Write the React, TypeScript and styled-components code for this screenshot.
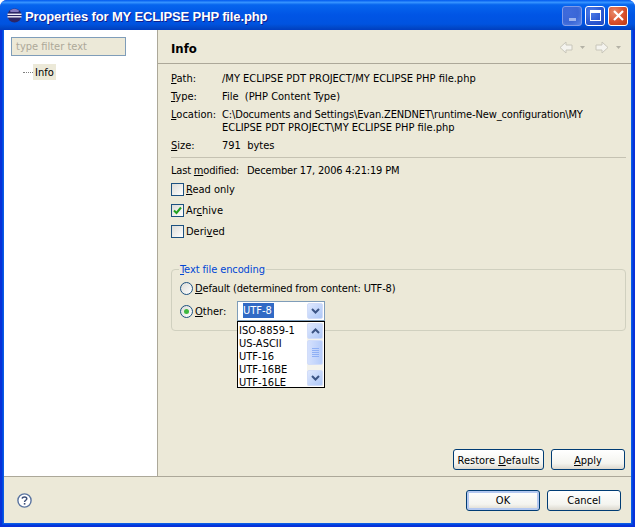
import styled, { createGlobalStyle } from "styled-components";

const GlobalStyle = createGlobalStyle`
  html, body {
    margin: 0;
    padding: 0;
    background: #fff;
  }
  body {
    font-family: "DejaVu Sans Condensed", "DejaVu Sans", "Liberation Sans", sans-serif;
    font-size: 11px;
    color: #000;
  }
`;

const Window = styled.div`
  width: 635px;
  height: 527px;
  display: flex;
  flex-direction: column;
  background: #0831d9;
  border-radius: 7px 7px 0 0;
  overflow: hidden;
`;

const TitleBar = styled.div`
  height: 30px;
  display: flex;
  align-items: center;
  padding: 1px 7px 0;
  box-sizing: border-box;
  gap: 3px;
  background: linear-gradient(
    180deg,
    #0058ee 0%,
    #3593ff 8%,
    #0665ee 16%,
    #0055e5 50%,
    #0053e0 80%,
    #0148c8 92%,
    #003dc0 100%
  );
`;

const TitleText = styled.div`
  flex: 1;
  padding-top: 2px;
  font-family: "Liberation Sans", sans-serif;
  font-weight: 700;
  font-size: 13px;
  letter-spacing: -0.13px;
  color: #fff;
  text-shadow: 1px 1px 0 #0f1f8f;
`;

const Controls = styled.div`
  display: flex;
  gap: 3px;
`;

const ControlButton = styled.div<{ $kind: "min" | "max" | "close" }>`
  width: 20px;
  height: 20px;
  box-sizing: border-box;
  border: 1px solid ${(p) => (p.$kind === "min" ? "#7f9be8" : "#fff")};
  border-radius: 3px;
  display: flex;
  align-items: center;
  justify-content: center;
  background: ${(p) =>
    p.$kind === "close"
      ? "radial-gradient(circle at 30% 30%, #e98a6a, #d8502c 55%, #bd3a12)"
      : p.$kind === "max"
      ? "radial-gradient(circle at 30% 30%, #4f7de8, #2a57d0 60%, #2048c0)"
      : "radial-gradient(circle at 30% 30%, #3f6bdc, #3a66d6 55%, #5c86e6)"};
`;

const Body = styled.div`
  flex: 1;
  display: flex;
  flex-direction: column;
  margin: 0 4px 4px;
  background: #ece9d8;
  min-height: 0;
  box-shadow: 0 0 0 1px #0a5ae6, 0 0 0 2px #0048e0;
  clip-path: inset(0 -4px -4px -4px);
`;

const Main = styled.div`
  flex: 1;
  display: flex;
  min-height: 0;
`;

const Sidebar = styled.div`
  width: 146px;
  background: #fff;
  border-right: 1px solid #aca899;
  padding: 7px 0 0 7px;
`;

const FilterInput = styled.div`
  width: 115px;
  height: 19px;
  box-sizing: border-box;
  background: #ece9d8;
  border: 1px solid #7f9db9;
  padding-left: 4px;
  line-height: 18px;
  color: #aca899;
`;

const TreeRow = styled.div`
  display: flex;
  align-items: center;
  margin: 8px 0 0 12px;
`;

const TreeDots = styled.div`
  width: 10px;
  border-top: 1px dotted #808080;
`;

const TreeLabel = styled.div<{ $selected?: boolean }>`
  height: 16px;
  line-height: 17px;
  padding: 0 2px;
  background: ${(p) => (p.$selected ? "#ece9d8" : "transparent")};
`;

const Content = styled.div`
  flex: 1;
  display: flex;
  flex-direction: column;
  min-width: 0;
`;

const Header = styled.div`
  height: 34px;
  box-sizing: border-box;
  border-bottom: 1px solid #aca899;
  display: flex;
  align-items: center;
  justify-content: space-between;
  padding: 2px 10px 0 13px;
`;

const HeaderTitle = styled.div`
  padding-top: 2px;
  font-weight: 700;
  font-size: 13px;
`;

const NavGroup = styled.div`
  display: flex;
  align-items: center;
  gap: 10px;
`;

const NavItem = styled.div`
  display: flex;
  align-items: center;
  gap: 7px;
`;

const Panel = styled.div`
  flex: 1;
  display: flex;
  flex-direction: column;
  padding: 8px 5px 6px 13px;
  min-height: 0;
`;

const InfoRow = styled.div`
  display: flex;
  margin-bottom: 5px;
  line-height: 13px;
`;

const InfoLabel = styled.div`
  width: 51px;
  flex: none;
`;

const InfoValue = styled.div`
  flex: 1;
  white-space: pre-wrap;
`;

const InfoLine = styled.div<{ $tight?: boolean }>`
  white-space: nowrap;
  letter-spacing: ${(p) => (p.$tight ? "-0.14px" : "0")};
`;

const Mnemonic = styled.span`
  text-decoration: underline;
`;

const Separator = styled.div`
  height: 1px;
  background: #c5c2b2;
  margin: 0 0 6px;
`;

const ModifiedRow = styled.div`
  line-height: 13px;
  display: flex;
  gap: 8px;
  letter-spacing: -0.18px;
`;

const CheckList = styled.div`
  display: flex;
  flex-direction: column;
  gap: 8px;
  margin-top: 6px;
`;

const CheckRow = styled.div`
  display: flex;
  align-items: center;
  gap: 2px;
  height: 13px;
`;

const CheckBox = styled.div`
  width: 13px;
  height: 13px;
  box-sizing: border-box;
  border: 1px solid #1c5180;
  background: linear-gradient(135deg, #dcdcd7, #fff);
  display: flex;
  align-items: center;
  justify-content: center;
`;

const GroupBox = styled.div`
  position: relative;
  margin-top: 31px;
  height: 62px;
  box-sizing: border-box;
  border: 1px solid #d0d0bf;
  border-radius: 4px;
  padding: 12px 8px 0;
`;

const GroupLegend = styled.div`
  position: absolute;
  top: -7px;
  left: 7px;
  padding: 0 1px;
  background: #ece9d8;
  color: #0046d5;
  line-height: 13px;
  letter-spacing: -0.1px;
`;

const RadioRow = styled.div`
  display: flex;
  align-items: center;
  gap: 2px;
  height: 13px;
  margin-bottom: 10px;
`;

const Radio = styled.div<{ $on?: boolean }>`
  width: 13px;
  height: 13px;
  box-sizing: border-box;
  border: 1px solid #1c5180;
  border-radius: 50%;
  background: linear-gradient(135deg, #dcdcd7, #fff);
  display: flex;
  align-items: center;
  justify-content: center;
  &::after {
    content: "";
    display: ${(p) => (p.$on ? "block" : "none")};
    width: 5px;
    height: 5px;
    border-radius: 50%;
    background: #3fb83f;
  }
`;

const RadioText = styled.span`
  letter-spacing: -0.16px;
`;

const OtherLabel = styled.div`
  width: 40px;
`;

const Combo = styled.div`
  position: relative;
  width: 88px;
  height: 20px;
  margin-top: -2px;
  box-sizing: border-box;
  border: 1px solid #7f9db9;
  background: #fff;
  display: flex;
  align-items: center;
  padding: 0 1px 0 5px;
`;

const ComboText = styled.div`
  flex: 1;
  span {
    background: #316ac5;
    color: #fff;
    padding: 1px 2px 1px 0;
  }
`;

const ArrowButton = styled.div<{ $h: number }>`
  width: 16px;
  height: ${(p) => p.$h}px;
  box-sizing: border-box;
  border: 1px solid #d2ddf9;
  border-radius: 2px;
  background: linear-gradient(135deg, #dfe8fe, #aec8f7);
  display: flex;
  align-items: center;
  justify-content: center;
  flex: none;
`;

const DropList = styled.div`
  position: absolute;
  left: -1px;
  top: 19px;
  width: 88px;
  height: 67px;
  box-sizing: border-box;
  border: 1px solid #000;
  background: #fff;
  display: flex;
  z-index: 2;
`;

const DropItems = styled.div`
  flex: 1;
  padding: 2px 0 0 1px;
  line-height: 13px;
`;

const ScrollTrack = styled.div`
  width: 16px;
  margin: 1px 1px 1px 0;
  background: #f4f3ec;
  display: flex;
  flex-direction: column;
`;

const ScrollThumb = styled.div`
  height: 25px;
  box-sizing: border-box;
  margin: 1px 0 0;
  border: 1px solid #d2ddf9;
  border-radius: 2px;
  background: linear-gradient(90deg, #d5e1fd, #b6ccfa);
  display: flex;
  flex-direction: column;
  align-items: center;
  justify-content: center;
  gap: 1px;
  i {
    display: block;
    width: 7px;
    height: 1px;
    background: #8fb0f5;
  }
`;

const TrackSpace = styled.div`
  flex: 1;
`;

const ApplyRow = styled.div`
  margin-top: auto;
  margin-right: 1px;
  display: flex;
  justify-content: flex-end;
  gap: 7px;
`;

const Button = styled.div<{ $w: number; $default?: boolean }>`
  width: ${(p) => p.$w}px;
  height: 21px;
  box-sizing: border-box;
  padding-top: 1px;
  border: 1px solid #003c74;
  border-radius: 3px;
  background: linear-gradient(180deg, #fff, #f4f4ef 70%, #dcd8ce);
  box-shadow: ${(p) => (p.$default ? "inset 0 0 0 2px #b4c8f0" : "none")};
  display: flex;
  align-items: center;
  justify-content: center;
`;

const Footer = styled.div`
  height: 47px;
  box-sizing: border-box;
  border-top: 1px solid #aca899;
  display: flex;
  align-items: center;
  justify-content: space-between;
  padding: 0 10px 0 13px;
`;

const FooterButtons = styled.div`
  display: flex;
  gap: 7px;
`;

const EclipseIcon = () => (
  <svg width="15" height="15" viewBox="0 0 15 15">
    <circle cx="7.5" cy="7.5" r="7" fill="#2c2566" />
    <path d="M3 2.5 A7 7 0 0 1 12 2.5 L11.5 4 H3.5 Z" fill="#8378c0" />
    <rect x="0.5" y="5.6" width="14" height="1.4" fill="#f0eefa" />
    <rect x="0.5" y="8.1" width="14" height="1.4" fill="#f0eefa" />
  </svg>
);

const NavArrow = ({ dir }: { dir: "left" | "right" }) => (
  <svg width="14" height="13" viewBox="0 0 14 13">
    <path
      d={dir === "left" ? "M1 6.5 L7 1 V4 H13 V9 H7 V12 Z" : "M13 6.5 L7 1 V4 H1 V9 H7 V12 Z"}
      fill="#f4f3ee"
      stroke="#c8c6ba"
    />
  </svg>
);

const NavCaret = () => (
  <svg width="5" height="3" viewBox="0 0 5 3">
    <path d="M0 0 H5 L2.5 3 Z" fill="#b4b2a6" />
  </svg>
);

const Chevron = ({ up }: { up?: boolean }) => (
  <svg width="9" height="6" viewBox="0 0 9 6">
    <path
      d={up ? "M1 5 L4.5 1.5 L8 5" : "M1 1 L4.5 4.5 L8 1"}
      fill="none"
      stroke="#3c5585"
      strokeWidth="2"
    />
  </svg>
);

const HelpIcon = () => (
  <svg width="15" height="15" viewBox="0 0 15 15">
    <circle cx="7.5" cy="7.5" r="6.6" fill="#fff" stroke="#5a74a0" strokeWidth="1.4" />
    <path d="M5.2 5.6 C5.4 3.4 9.8 3.4 9.8 5.7 C9.8 7.3 7.6 7.2 7.6 9" fill="none" stroke="#3c4f78" strokeWidth="1.5" />
    <rect x="6.8" y="10" width="1.6" height="1.6" fill="#3c4f78" />
  </svg>
);

export default function App() {
  return (
    <>
      <GlobalStyle />
      <Window>
        <TitleBar>
          <EclipseIcon />
          <TitleText>Properties for MY ECLIPSE PHP file.php</TitleText>
          <Controls>
            <ControlButton $kind="min">
              <svg width="9" height="11" viewBox="0 0 9 11">
                <rect x="1" y="8" width="7" height="3" fill="#9db4ee" />
              </svg>
            </ControlButton>
            <ControlButton $kind="max">
              <svg width="11" height="11" viewBox="0 0 11 11">
                <rect x="0.5" y="0.5" width="10" height="10" fill="none" stroke="#fff" />
                <rect x="0" y="0" width="11" height="3" fill="#fff" />
              </svg>
            </ControlButton>
            <ControlButton $kind="close">
              <svg width="11" height="11" viewBox="0 0 11 11">
                <path d="M1 1 L10 10 M10 1 L1 10" stroke="#fff" strokeWidth="2.2" />
              </svg>
            </ControlButton>
          </Controls>
        </TitleBar>
        <Body>
          <Main>
            <Sidebar>
              <FilterInput>type filter text</FilterInput>
              <TreeRow>
                <TreeDots />
                <TreeLabel $selected>Info</TreeLabel>
              </TreeRow>
            </Sidebar>
            <Content>
              <Header>
                <HeaderTitle>Info</HeaderTitle>
                <NavGroup>
                  <NavItem>
                    <NavArrow dir="left" />
                    <NavCaret />
                  </NavItem>
                  <NavItem>
                    <NavArrow dir="right" />
                    <NavCaret />
                  </NavItem>
                </NavGroup>
              </Header>
              <Panel>
                <InfoRow>
                  <InfoLabel><Mnemonic>P</Mnemonic>ath:</InfoLabel>
                  <InfoValue>/MY ECLIPSE PDT PROJECT/MY ECLIPSE PHP file.php</InfoValue>
                </InfoRow>
                <InfoRow>
                  <InfoLabel><Mnemonic>T</Mnemonic>ype:</InfoLabel>
                  <InfoValue>File  (PHP Content Type)</InfoValue>
                </InfoRow>
                <InfoRow>
                  <InfoLabel><Mnemonic>L</Mnemonic>ocation:</InfoLabel>
                  <InfoValue>
                    <InfoLine $tight>C:\Documents and Settings\Evan.ZENDNET\runtime-New_configuration\MY</InfoLine>
                    <InfoLine>ECLIPSE PDT PROJECT\MY ECLIPSE PHP file.php</InfoLine>
                  </InfoValue>
                </InfoRow>
                <InfoRow>
                  <InfoLabel><Mnemonic>S</Mnemonic>ize:</InfoLabel>
                  <InfoValue>791  bytes</InfoValue>
                </InfoRow>
                <Separator />
                <ModifiedRow>
                  <span>Last <Mnemonic>m</Mnemonic>odified:</span>
                  <span>December 17, 2006 4:21:19 PM</span>
                </ModifiedRow>
                <CheckList>
                  <CheckRow>
                    <CheckBox />
                    <span><Mnemonic>R</Mnemonic>ead only</span>
                  </CheckRow>
                  <CheckRow>
                    <CheckBox>
                      <svg width="9" height="9" viewBox="0 0 9 9">
                        <path d="M1 4.5 L3.5 7 L8 1.5" fill="none" stroke="#21a121" strokeWidth="2" />
                      </svg>
                    </CheckBox>
                    <span>Ar<Mnemonic>c</Mnemonic>hive</span>
                  </CheckRow>
                  <CheckRow>
                    <CheckBox />
                    <span>Deri<Mnemonic>v</Mnemonic>ed</span>
                  </CheckRow>
                </CheckList>
                <GroupBox>
                  <GroupLegend><Mnemonic>T</Mnemonic>ext file encoding</GroupLegend>
                  <RadioRow>
                    <Radio />
                    <RadioText><Mnemonic>D</Mnemonic>efault (determined from content: UTF-8)</RadioText>
                  </RadioRow>
                  <RadioRow>
                    <Radio $on />
                    <OtherLabel><Mnemonic>O</Mnemonic>ther:</OtherLabel>
                    <Combo>
                      <ComboText><span>UTF-8</span></ComboText>
                      <ArrowButton $h={16}><Chevron /></ArrowButton>
                      <DropList>
                        <DropItems>
                          <div>ISO-8859-1</div>
                          <div>US-ASCII</div>
                          <div>UTF-16</div>
                          <div>UTF-16BE</div>
                          <div>UTF-16LE</div>
                        </DropItems>
                        <ScrollTrack>
                          <ArrowButton $h={16}><Chevron up /></ArrowButton>
                          <ScrollThumb><i /><i /><i /><i /><i /></ScrollThumb>
                          <TrackSpace />
                          <ArrowButton $h={16}><Chevron /></ArrowButton>
                        </ScrollTrack>
                      </DropList>
                    </Combo>
                  </RadioRow>
                </GroupBox>
                <ApplyRow>
                  <Button $w={91}>
                    <span>Restore <Mnemonic>D</Mnemonic>efaults</span>
                  </Button>
                  <Button $w={74}>
                    <span><Mnemonic>A</Mnemonic>pply</span>
                  </Button>
                </ApplyRow>
              </Panel>
            </Content>
          </Main>
          <Footer>
            <HelpIcon />
            <FooterButtons>
              <Button $w={74} $default>OK</Button>
              <Button $w={74}>Cancel</Button>
            </FooterButtons>
          </Footer>
        </Body>
      </Window>
    </>
  );
}
